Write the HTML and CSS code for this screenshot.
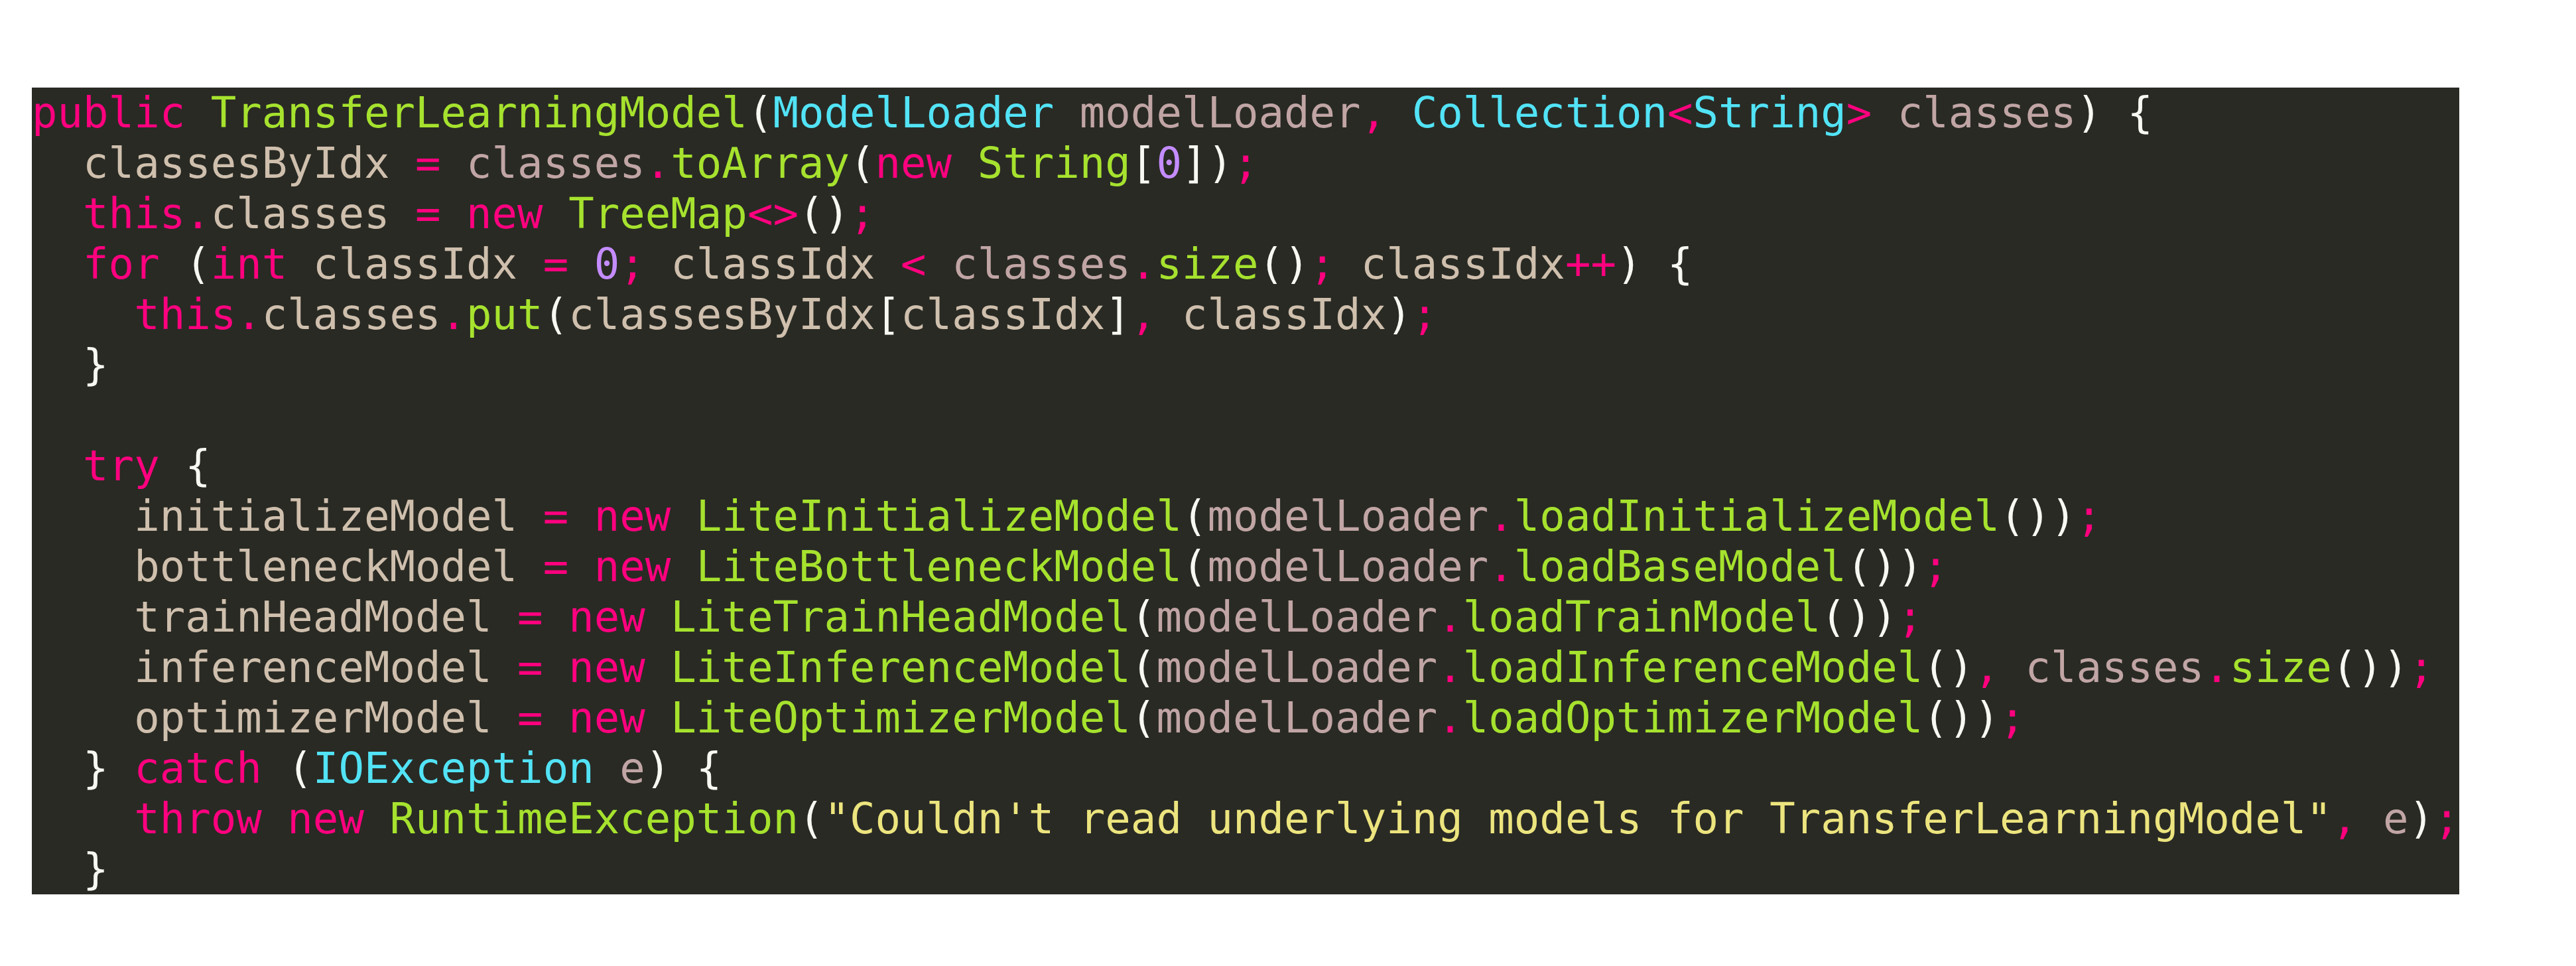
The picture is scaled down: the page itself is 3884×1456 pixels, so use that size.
FILE: index.html
```html
<!DOCTYPE html>
<html>
<head>
<meta charset="utf-8">
<link rel="stylesheet" href="styles.css">
</head>
<body>
<div class="page">
<pre class="code"><span class="kw">public</span> <span class="fn">TransferLearningModel</span><span class="pn">(</span><span class="ty">ModelLoader</span> <span class="pm">modelLoader</span><span class="op">,</span> <span class="ty">Collection</span><span class="op">&lt;</span><span class="ty">String</span><span class="op">&gt;</span> <span class="pm">classes</span><span class="pn">)</span> <span class="pn">{</span>
  <span class="mb">classesByIdx</span> <span class="op">=</span> <span class="pm">classes</span><span class="op">.</span><span class="fn">toArray</span><span class="pn">(</span><span class="kw">new</span> <span class="fn">String</span><span class="pn">[</span><span class="nu">0</span><span class="pn">])</span><span class="op">;</span>
  <span class="kw">this</span><span class="op">.</span><span class="mb">classes</span> <span class="op">=</span> <span class="kw">new</span> <span class="fn">TreeMap</span><span class="op">&lt;&gt;</span><span class="pn">()</span><span class="op">;</span>
  <span class="kw">for</span> <span class="pn">(</span><span class="kw">int</span> <span class="mb">classIdx</span> <span class="op">=</span> <span class="nu">0</span><span class="op">;</span> <span class="mb">classIdx</span> <span class="op">&lt;</span> <span class="pm">classes</span><span class="op">.</span><span class="fn">size</span><span class="pn">()</span><span class="op">;</span> <span class="mb">classIdx</span><span class="op">++</span><span class="pn">)</span> <span class="pn">{</span>
    <span class="kw">this</span><span class="op">.</span><span class="mb">classes</span><span class="op">.</span><span class="fn">put</span><span class="pn">(</span><span class="mb">classesByIdx</span><span class="pn">[</span><span class="mb">classIdx</span><span class="pn">]</span><span class="op">,</span> <span class="mb">classIdx</span><span class="pn">)</span><span class="op">;</span>
  <span class="pn">}</span>

  <span class="kw">try</span> <span class="pn">{</span>
    <span class="mb">initializeModel</span> <span class="op">=</span> <span class="kw">new</span> <span class="fn">LiteInitializeModel</span><span class="pn">(</span><span class="pm">modelLoader</span><span class="op">.</span><span class="fn">loadInitializeModel</span><span class="pn">())</span><span class="op">;</span>
    <span class="mb">bottleneckModel</span> <span class="op">=</span> <span class="kw">new</span> <span class="fn">LiteBottleneckModel</span><span class="pn">(</span><span class="pm">modelLoader</span><span class="op">.</span><span class="fn">loadBaseModel</span><span class="pn">())</span><span class="op">;</span>
    <span class="mb">trainHeadModel</span> <span class="op">=</span> <span class="kw">new</span> <span class="fn">LiteTrainHeadModel</span><span class="pn">(</span><span class="pm">modelLoader</span><span class="op">.</span><span class="fn">loadTrainModel</span><span class="pn">())</span><span class="op">;</span>
    <span class="mb">inferenceModel</span> <span class="op">=</span> <span class="kw">new</span> <span class="fn">LiteInferenceModel</span><span class="pn">(</span><span class="pm">modelLoader</span><span class="op">.</span><span class="fn">loadInferenceModel</span><span class="pn">()</span><span class="op">,</span> <span class="pm">classes</span><span class="op">.</span><span class="fn">size</span><span class="pn">())</span><span class="op">;</span>
    <span class="mb">optimizerModel</span> <span class="op">=</span> <span class="kw">new</span> <span class="fn">LiteOptimizerModel</span><span class="pn">(</span><span class="pm">modelLoader</span><span class="op">.</span><span class="fn">loadOptimizerModel</span><span class="pn">())</span><span class="op">;</span>
  <span class="pn">}</span> <span class="kw">catch</span> <span class="pn">(</span><span class="ty">IOException</span> <span class="pm">e</span><span class="pn">)</span> <span class="pn">{</span>
    <span class="kw">throw</span> <span class="kw">new</span> <span class="fn">RuntimeException</span><span class="pn">(</span><span class="st">"Couldn't read underlying models for TransferLearningModel"</span><span class="op">,</span> <span class="pm">e</span><span class="pn">)</span><span class="op">;</span>
  <span class="pn">}</span></pre>
</div>
</body>
</html>
```

FILE: styles.css
```css
html, body {
  margin: 0;
  padding: 0;
  background: #ffffff;
}

.page {
  padding: 132px 0 0 48px;
}

.code {
  display: inline-block;
  margin: 0;
  padding: 0;
  background: #292a24;
  color: #f8f8f2;
  font-family: "DejaVu Sans Mono", "Liberation Mono", monospace;
  font-size: 64px;
  line-height: 76px;
  white-space: pre;
}

.kw { color: #ff007f; }
.op { color: #ff007f; }
.fn { color: #a6e22e; }
.ty { color: #52e3f6; }
.pm { color: #c1a5a5; }
.mb { color: #cfbfad; }
.nu { color: #c48cff; }
.st { color: #ece47e; }
.pn { color: #f8f8f2; }
```
